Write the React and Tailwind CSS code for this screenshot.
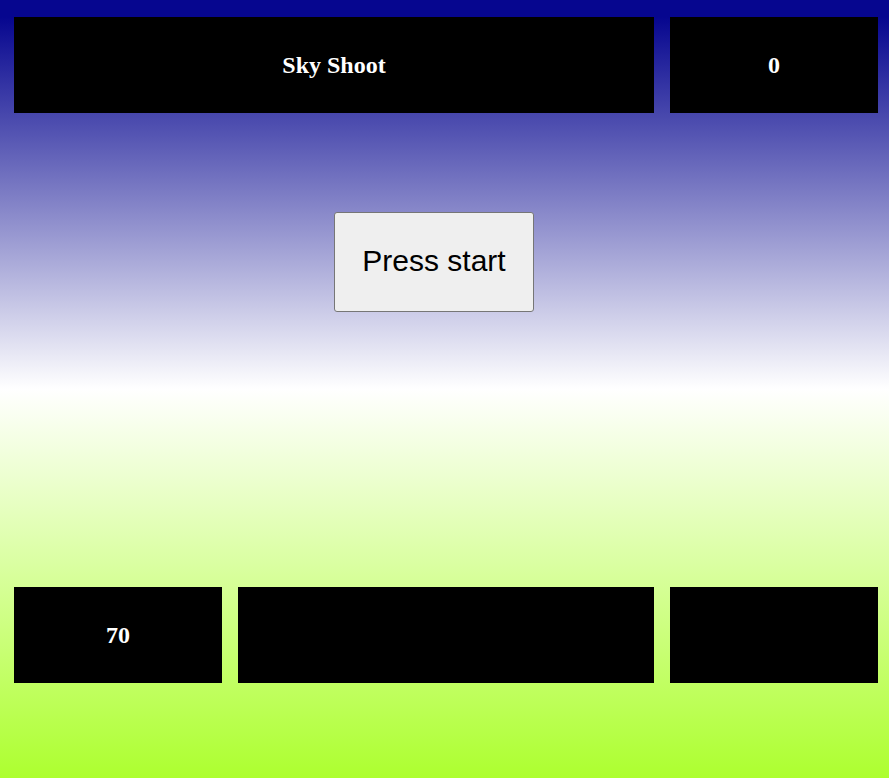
const Panel = ({ children, className = '' }) => (
  <div
    className={`flex h-[96px] items-center justify-center bg-black font-['Liberation_Serif',serif] text-[24px] font-bold text-white ${className}`}
  >
    {children}
  </div>
);

export default function App() {
  return (
    <div className="min-h-[778px] bg-[linear-gradient(to_bottom,#06068f_17px,#ffffff_50%,#adff2f)] pl-[14px] pt-[17px]">
      <div className="grid w-[864px] grid-cols-[208px_416px_208px] gap-x-[16px]">
        <Panel className="col-span-2">Sky Shoot</Panel>
        <Panel>0</Panel>
      </div>

      <div className="h-[474px] pl-[320px] pt-[99px]">
        <button className="h-[100px] w-[200px] rounded-[3px] border border-[#767676] bg-[#efefef] pb-[3px] font-['Liberation_Sans',Arial,sans-serif] text-[30px] text-black">
          Press start
        </button>
      </div>

      <div className="grid w-[864px] grid-cols-[208px_416px_208px] gap-x-[16px]">
        <Panel>70</Panel>
        <Panel></Panel>
        <Panel></Panel>
      </div>
    </div>
  );
}
